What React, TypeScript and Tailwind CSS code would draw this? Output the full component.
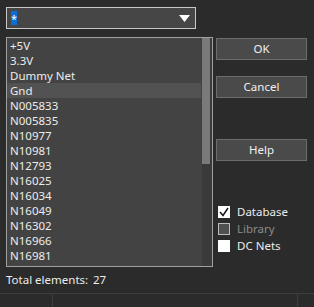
import React from "react";

const nets = [
  "+5V",
  "3.3V",
  "Dummy Net",
  "Gnd",
  "N005833",
  "N005835",
  "N10977",
  "N10981",
  "N12793",
  "N16025",
  "N16034",
  "N16049",
  "N16302",
  "N16966",
  "N16981",
];

function Btn({ label }: { label: string }) {
  return (
    <div className="w-[91px] h-[22px] border border-[#6c6c6c] bg-[#4a4a4a] flex items-center justify-center text-[11.5px] text-[#f0f0f0]">
      {label}
    </div>
  );
}

export default function App() {
  return (
    <div
      className="w-[314px] h-[307px] bg-[#2b2b2b] flex flex-col text-[11.5px] text-[#ececec] overflow-hidden"
      style={{ fontFamily: '"Noto Sans", "Open Sans", sans-serif' }}
    >
      {/* combo */}
      <div className="mt-[7px] ml-[6px] w-[190px] h-[22px] border border-[#c8c8c8] bg-[#464646] flex items-center pl-[4px] pr-[5px]">
        <span className="bg-[#0a6fd6] text-white h-[14px] w-[6px] flex items-center justify-center text-[11px] leading-none">
          *
        </span>
        <div className="flex-1" />
        <svg width="11" height="7" viewBox="0 0 11 7">
          <polygon points="0,0 11,0 5.5,7" fill="#ffffff" />
        </svg>
      </div>

      <div className="flex mt-[8px]">
        {/* list */}
        <div className="ml-[6px] w-[207px] h-[230px] border border-[#a0a0a0] bg-[#434343] flex">
          <div className="flex-1 flex flex-col">
            {nets.map((n) => (
              <div
                key={n}
                className={
                  "h-[15px] leading-[15px] pl-[3px] mr-[1px] whitespace-nowrap overflow-hidden " +
                  (n === "Gnd" ? "bg-[#525252]" : "")
                }
              >
                {n}
              </div>
            ))}
          </div>
          <div className="w-[10px] bg-[#3a3a3a] flex flex-col">
            <div className="w-[8px] h-[126px] bg-[#7a7a7a]" />
          </div>
        </div>

        {/* right column */}
        <div className="ml-[3px] flex flex-col">
          <div className="mt-[1px]">
            <Btn label="OK" />
          </div>
          <div className="mt-[16px]">
            <Btn label="Cancel" />
          </div>
          <div className="mt-[41px]">
            <Btn label="Help" />
          </div>
          <div className="mt-[45px] flex flex-col gap-[5px] ml-[2px]">
            <div className="flex items-center h-[12px]">
              <div className="w-[12px] h-[12px] bg-white flex items-center justify-center">
                <svg width="10" height="10" viewBox="0 0 10 10">
                  <polyline
                    points="1,5 4,8.5 9,1"
                    fill="none"
                    stroke="#111"
                    strokeWidth="1.4"
                  />
                </svg>
              </div>
              <span className="ml-[7px]">Database</span>
            </div>
            <div className="flex items-center h-[12px]">
              <div className="w-[12px] h-[12px] border border-[#bdbdbd] bg-[#505050]" />
              <span className="ml-[7px] text-[#8c8c8c]">Library</span>
            </div>
            <div className="flex items-center h-[12px]">
              <div className="w-[12px] h-[12px] bg-white" />
              <span className="ml-[7px]">DC Nets</span>
            </div>
          </div>
        </div>
      </div>

      {/* total */}
      <div className="flex ml-[6px] mt-[3px] h-[20px] items-center">
        <span className="w-[87px]">Total elements:</span>
        <span>27</span>
      </div>

      {/* status bar */}
      <div className="mt-[3px] flex-1 border-t border-[#3e3e3e] flex">
        <div className="w-[53px] border-r border-[#3e3e3e]" />
        <div className="flex-1 border-r border-[#3e3e3e] mr-[16px]" />
      </div>
    </div>
  );
}
